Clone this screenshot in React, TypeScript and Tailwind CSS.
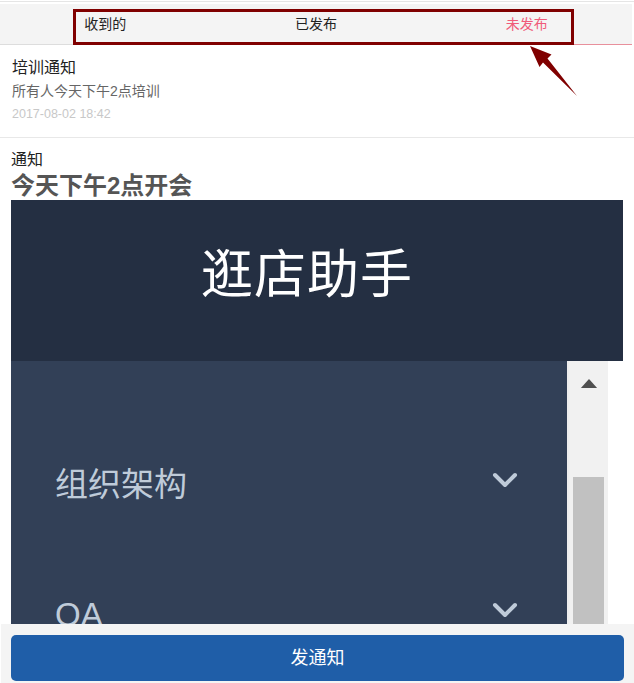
import { ChevronDown } from 'lucide-react';
import clsx from 'clsx';

const TABS = ['收到的', '已发布', '未发布'];
const ACTIVE = 2;

const CN = { fontFamily: '"Liberation Sans", "Noto Sans CJK SC", sans-serif' };

function Tabs() {
  return (
    <div className="relative">
      <div className="flex h-[41px] mr-[2px] bg-[#f4f4f4] border-b border-[#dddddd]">
        {TABS.map((t, i) => (
          <div
            key={t}
            className={clsx(
              'flex-1 flex items-center justify-center text-[14px]',
              i === ACTIVE ? 'text-[#f05b7a] border-b border-[#e8909c] -mb-px' : 'text-[#222]'
            )}
          >
            {t}
          </div>
        ))}
      </div>
      {/* annotation box */}
      <div className="absolute left-[73px] top-[5px] w-[501px] h-[36px] border-[3px] border-[#800000]" />
      {/* annotation arrow */}
      <svg className="absolute left-[520px] top-[36px]" width="65" height="62" viewBox="0 0 65 62">
        <polygon points="10,6 31.5,14.5 27.5,18.5 57,56 23,22.5 19.5,27" fill="#800000" />
      </svg>
    </div>
  );
}

function AppShot() {
  return (
    <div className="mx-[11px] bg-white">
      <div className="h-[161px] bg-[#242f42] flex items-center justify-center pr-[20px] pb-[12px]">
        <span className="text-white text-[52px] tracking-[1px]">逛店助手</span>
      </div>
      <div className="flex h-[300px]">
        <div className="flex-1 bg-[#324057] pt-[57px]">
          {['组织架构', 'OA'].map((m) => (
            <div key={m} className="h-[130px] flex items-center justify-between pl-[44px] pr-[42px]">
              <span className="text-[#bfcbd9] text-[33px] mt-[4px]">{m}</span>
              <ChevronDown size={40} strokeWidth={2.4} className="text-[#bfcbd9] -mt-[6px]" />
            </div>
          ))}
        </div>
        <div className="w-[2px] bg-[#eeeeee]" />
        <div className="w-[39px] bg-[#f1f1f1] flex flex-col items-center">
          <svg className="mt-[18px]" width="18" height="10" viewBox="0 0 18 10">
            <polygon points="9,0 18,10 0,10" fill="#505050" />
          </svg>
          <div className="mt-[89px] w-[31px] h-[200px] bg-[#c1c1c1]" />
        </div>
        <div className="w-[15px] bg-white" />
      </div>
    </div>
  );
}

export default function App() {
  return (
    <div className="relative h-screen overflow-hidden bg-white" style={CN}>
      <div className="h-px mt-px bg-[#e5e5e5]" />
      <div className="h-[2px]" />
      <Tabs />

      <div className="h-[93px] px-[12px] pt-[12px] border-b border-[#e8e8e8]">
        <div className="text-[16px] text-[#222] leading-[22px]">培训通知</div>
        <div className="text-[14px] text-[#666] leading-[20px] mt-[2px]">所有人今天下午2点培训</div>
        <div className="text-[12.5px] text-[#c8c8c8] leading-[18px] mt-[4px]">2017-08-02 18:42</div>
      </div>

      <div className="pt-[12px]">
        <div className="px-[11px] text-[16px] text-[#222] leading-[20px]">通知</div>
        <div className="px-[11px] text-[24px] font-bold text-[#555] leading-[28px] mt-[2px]">今天下午2点开会</div>
        <AppShot />
      </div>

      {/* bottom action bar */}
      <div className="fixed left-0 right-0 bottom-0 h-[59px] bg-[#f4f4f4] ml-px px-[10px] pt-[11px]">
        <button className="w-full h-[46px] rounded-[5px] bg-[#1f5ea8] text-white text-[18px]">发通知</button>
      </div>
    </div>
  );
}
